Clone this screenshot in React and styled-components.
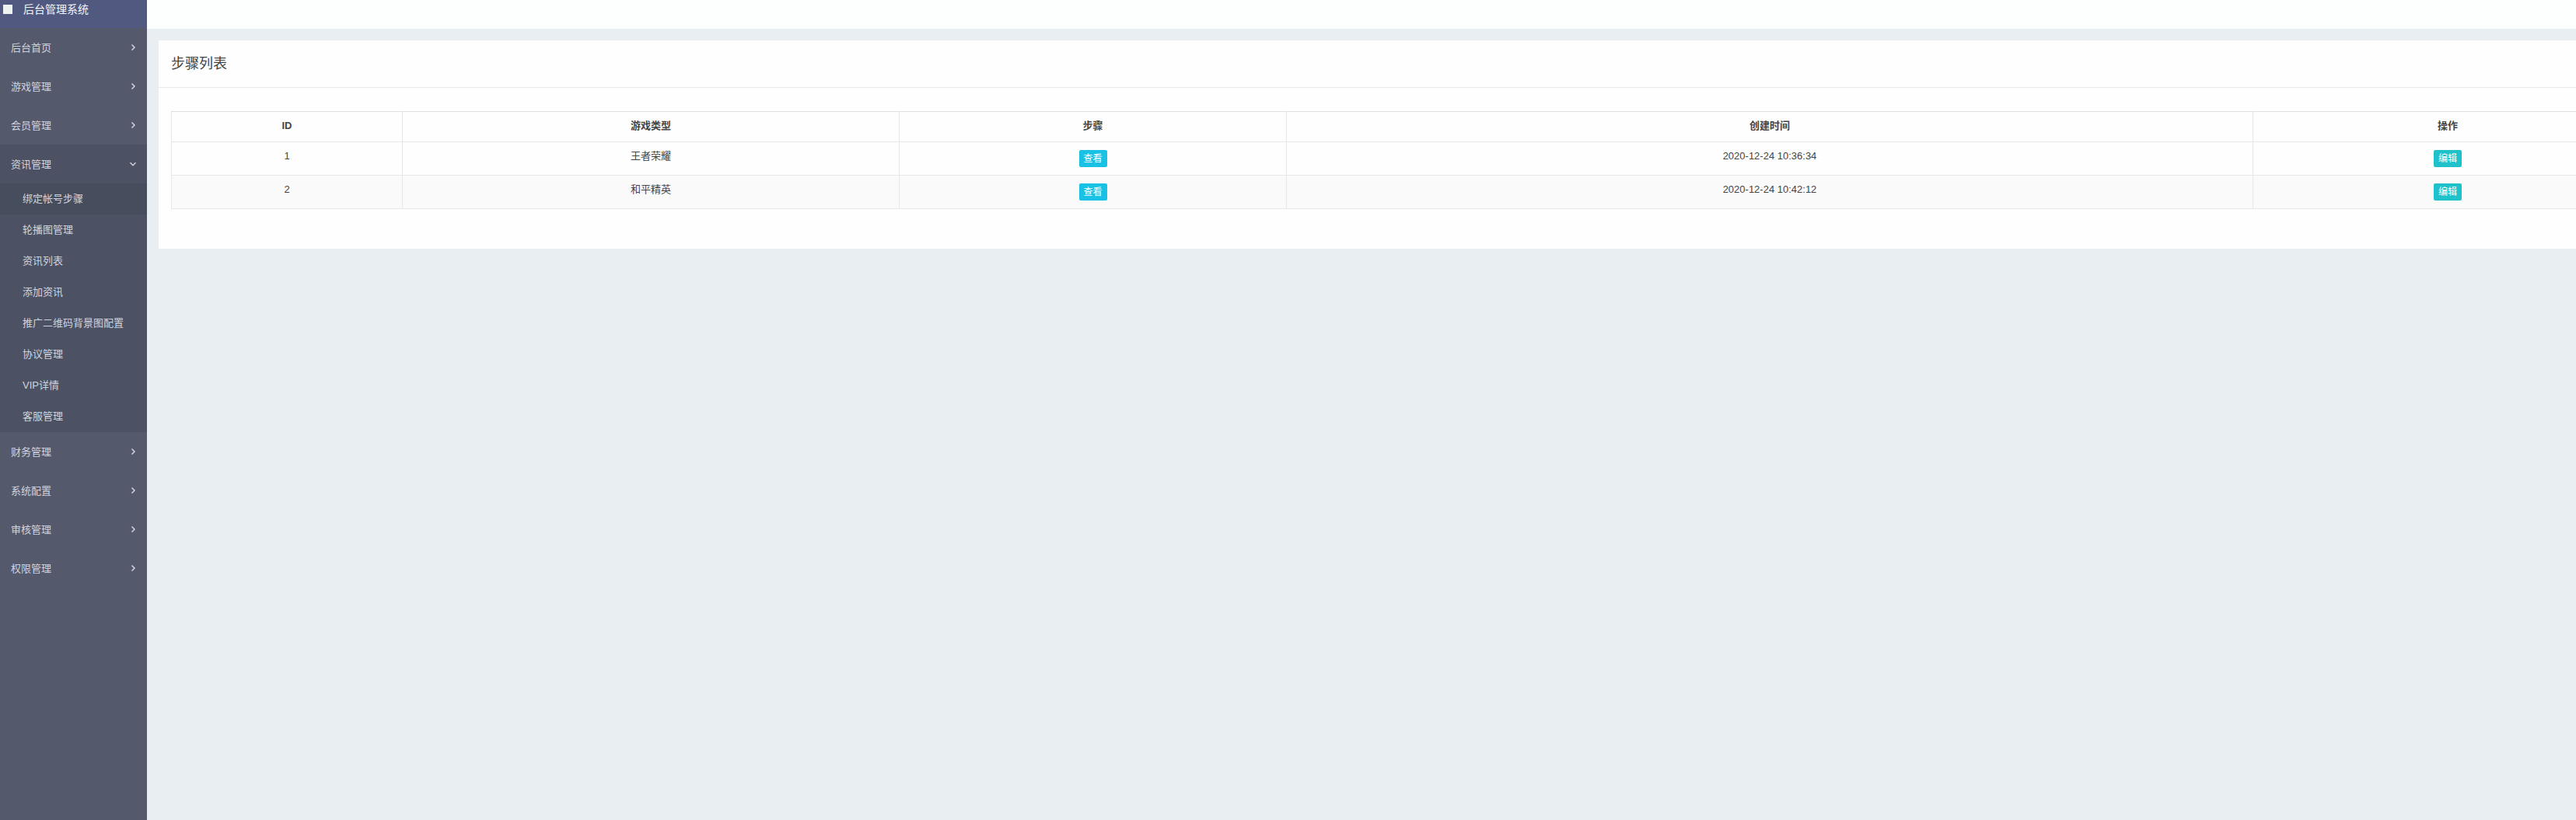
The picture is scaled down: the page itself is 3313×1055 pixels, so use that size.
import React, { useState } from "react";
import styled, { createGlobalStyle } from "styled-components";

const menus = [
  { name: "后台首页" },
  { name: "游戏管理" },
  { name: "会员管理" },
  {
    name: "资讯管理",
    children: [
      "绑定帐号步骤",
      "轮播图管理",
      "资讯列表",
      "添加资讯",
      "推广二维码背景图配置",
      "协议管理",
      "VIP详情",
      "客服管理",
    ],
  },
  { name: "财务管理" },
  { name: "系统配置" },
  { name: "审核管理" },
  { name: "权限管理" },
];

const rows = [
  { id: 1, game: "王者荣耀", created: "2020-12-24 10:36:34" },
  { id: 2, game: "和平精英", created: "2020-12-24 10:42:12" },
];

const Arrow = ({ open }) => (
  <ArrowIcon viewBox="0 0 10 10">
    <path d={open ? "M1.5 3.2 L5 6.7 L8.5 3.2" : "M3.5 1.5 L7 5 L3.5 8.5"} />
  </ArrowIcon>
);

const SideMenu = () => {
  const [opened, setOpened] = useState("资讯管理");
  const [current, setCurrent] = useState("绑定帐号步骤");

  return (
    <Sidebar>
      <Brand>
        <BrandMark />
        后台管理系统
      </Brand>
      {menus.map(({ name, children }) => {
        const open = opened === name;
        return (
          <MenuGroup key={name} $open={open}>
            <MenuTitle onClick={() => setOpened(open ? "" : name)}>
              {name}
              <Arrow open={open} />
            </MenuTitle>
            {open &&
              children?.map((item) => (
                <SubItem
                  key={item}
                  $active={item === current}
                  onClick={() => setCurrent(item)}
                >
                  {item}
                </SubItem>
              ))}
          </MenuGroup>
        );
      })}
    </Sidebar>
  );
};

const App = () => {
  return (
    <Page>
      <GlobalStyle />
      <SideMenu />
      <Main>
        <TopBar />
        <Content>
          <Panel>
            <PanelTitle>步骤列表</PanelTitle>
            <PanelBody>
              <Table>
                <colgroup>
                  <Col $width={297} />
                  <Col $width={639} />
                  <Col $width={498} />
                  <Col $width={1243} />
                  <Col $width={501} />
                </colgroup>
                <thead>
                  <tr>
                    <th>ID</th>
                    <th>游戏类型</th>
                    <th>步骤</th>
                    <th>创建时间</th>
                    <th>操作</th>
                  </tr>
                </thead>
                <tbody>
                  {rows.map((row) => (
                    <tr key={row.id}>
                      <td>{row.id}</td>
                      <td>{row.game}</td>
                      <td>
                        <Button $color="#19c1e4">查看</Button>
                      </td>
                      <td>{row.created}</td>
                      <td>
                        <Button $color="#1fc1ca">编辑</Button>
                      </td>
                    </tr>
                  ))}
                </tbody>
              </Table>
            </PanelBody>
          </Panel>
        </Content>
      </Main>
    </Page>
  );
};

export default App;

const GlobalStyle = createGlobalStyle`
  * {
    box-sizing: border-box;
  }
  body {
    margin: 0;
    overflow: hidden;
    color: #444;
    font-family: "Liberation Sans", "Noto Sans CJK SC", sans-serif;
    font-size: 13px;
  }
`;

const Page = styled.div`
  display: flex;
  width: 100vw;
  height: 100vh;
  overflow: hidden;
  background: #e9eef2;
`;

const Sidebar = styled.div`
  flex: none;
  width: 189px;
  background: #54596b;
  color: #d0d3de;
`;

const Brand = styled.div`
  display: flex;
  align-items: center;
  height: 36px;
  padding: 0 0 12px 4px;
  background: #525980;
  color: #f4f5fa;
  font-size: 14px;
  line-height: 24px;
`;

const BrandMark = styled.span`
  width: 12px;
  height: 12px;
  margin-right: 14px;
  background: #eef3ef;
`;

const MenuGroup = styled.div`
  background: ${({ $open }) => ($open ? "#4c5263" : "transparent")};
`;

const MenuTitle = styled.div`
  display: flex;
  align-items: center;
  justify-content: space-between;
  height: 50px;
  padding: 0 13px 0 14px;
  line-height: 49px;
  cursor: pointer;
`;

const ArrowIcon = styled.svg`
  width: 10px;
  height: 10px;
  fill: none;
  stroke: currentColor;
  stroke-width: 1.5;
`;

const SubItem = styled.div`
  height: 40px;
  padding-left: 29px;
  line-height: 40px;
  background: ${({ $active }) => ($active ? "#464d5c" : "transparent")};
  cursor: pointer;
`;

const Main = styled.div`
  flex: 1;
  min-width: 0;
  overflow: hidden;
`;

const TopBar = styled.div`
  height: 37px;
  background: #fdfffe;
`;

const Content = styled.div`
  padding: 15px;
`;

const Panel = styled.div`
  width: 3211px;
  height: 268px;
  background: #fefefe;
`;

const PanelTitle = styled.div`
  height: 61px;
  padding: 0 16px;
  border-bottom: 1px solid #e9e9eb;
  font-size: 18px;
  line-height: 61px;
`;

const PanelBody = styled.div`
  padding: 30px 16px;
`;

const Table = styled.table`
  width: 3179px;
  table-layout: fixed;
  border-collapse: collapse;
  text-align: center;

  th,
  td {
    padding: 10px 0 0;
    border: 1px solid #e6e7e9;
    line-height: 16px;
    vertical-align: top;
  }
  th {
    height: 39px;
    border-top-color: #dfdfe1;
    font-weight: 600;
  }
  td {
    height: 43px;
  }
  tbody tr:nth-child(even) {
    background: #fafafb;
  }
`;

const Col = styled.col`
  width: ${({ $width }) => $width}px;
`;

const Button = styled.button`
  display: block;
  width: 36px;
  height: 22px;
  margin: 0 auto;
  padding: 0;
  border: 0;
  border-radius: 2px;
  background: ${({ $color }) => $color};
  color: #fff;
  font-family: inherit;
  font-size: 12px;
  line-height: 22px;
  cursor: pointer;
`;
